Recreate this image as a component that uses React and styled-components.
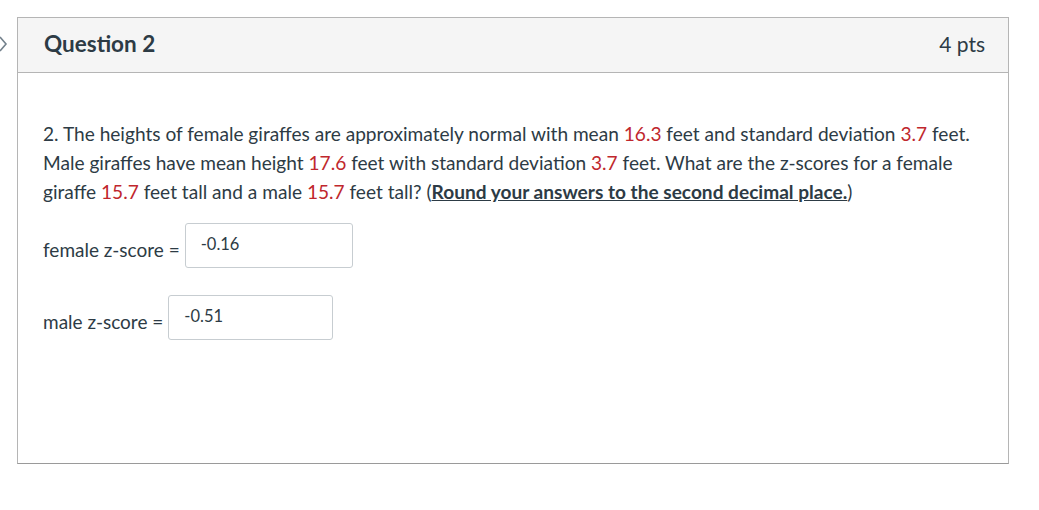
import React from "react";
import styled, { createGlobalStyle } from "styled-components";

const GlobalStyle = createGlobalStyle`
  body {
    margin: 0;
    background: #ffffff;
    font-family: Lato, "Open Sans", sans-serif;
    color: #2d3b45;
  }
`;

function App() {
  return (
    <>
      <GlobalStyle />
      <Page>
        <Chevron viewBox="0 0 10 20" aria-hidden="true">
          <path d="M1 3 L7 10 L1 17" fill="none" stroke="#73818c" strokeWidth="1.6" />
        </Chevron>
        <Card>
          <Header>
            <Title>Question 2</Title>
            <Points>4 pts</Points>
          </Header>
          <Body>
            <Text>
              2. The heights of female giraffes are approximately normal with mean{" "}
              <Num>16.3</Num> feet and standard deviation <Num>3.7</Num> feet. Male
              giraffes have mean height <Num>17.6</Num> feet with standard deviation{" "}
              <Num>3.7</Num> feet. What are the z-scores for a female giraffe{" "}
              <Num>15.7</Num> feet tall and a male <Num>15.7</Num> feet tall? (
              <Strong>Round your answers to the second decimal place.</Strong>)
            </Text>
            <Answer>
              <Label>female z-score =</Label>
              <Field width={168} defaultValue="-0.16" />
            </Answer>
            <Answer>
              <Label>male z-score =</Label>
              <Field width={165} defaultValue="-0.51" />
            </Answer>
          </Body>
        </Card>
      </Page>
    </>
  );
}

export default App;

const Page = styled.div`
  position: relative;
  padding: 17px 30px 0 17px;
`;

const Chevron = styled.svg`
  position: absolute;
  left: -1px;
  top: 34px;
  width: 10px;
  height: 20px;
`;

const Card = styled.div`
  width: 990px;
  height: 445px;
  border: 1px solid #b5b5b5;
  border-bottom-color: #9a9a9a;
  display: flex;
  flex-direction: column;
`;

const Header = styled.div`
  background: #f5f5f5;
  border-bottom: 1px solid #b5b5b5;
  display: flex;
  align-items: center;
  justify-content: space-between;
  padding: 0 23px 4px 26px;
  box-sizing: border-box;
  height: 55px;
`;

const Title = styled.div`
  font-size: 22.5px;
  font-weight: 700;
  color: #2d3b45;
`;

const Points = styled.div`
  font-size: 21px;
  font-weight: 400;
  color: #2d3b45;
`;

const Body = styled.div`
  padding: 46px 25px 0 25px;
`;

const Text = styled.p`
  margin: 0 0 17px 0;
  font-size: 19.1px;
  line-height: 29px;
  color: #2d3b45;
`;

const Num = styled.span`
  color: #c0272d;
`;

const Strong = styled.strong`
  font-weight: 700;
  text-decoration: underline;
`;

const Answer = styled.div`
  display: flex;
  align-items: center;
  gap: 5px;
  margin-bottom: 27px;
`;

const Label = styled.span`
  font-size: 19px;
  padding-top: 8px;
  color: #2d3b45;
`;

const Field = styled.input`
  box-sizing: border-box;
  width: ${(p) => p.width}px;
  height: 45px;
  border: 1px solid #c7cdd1;
  border-radius: 3px;
  padding: 0 0 4px 15px;
  font-family: Lato, "Open Sans", sans-serif;
  font-size: 16.5px;
  color: #2d3b45;
  background: #fff;
  outline: none;
`;
